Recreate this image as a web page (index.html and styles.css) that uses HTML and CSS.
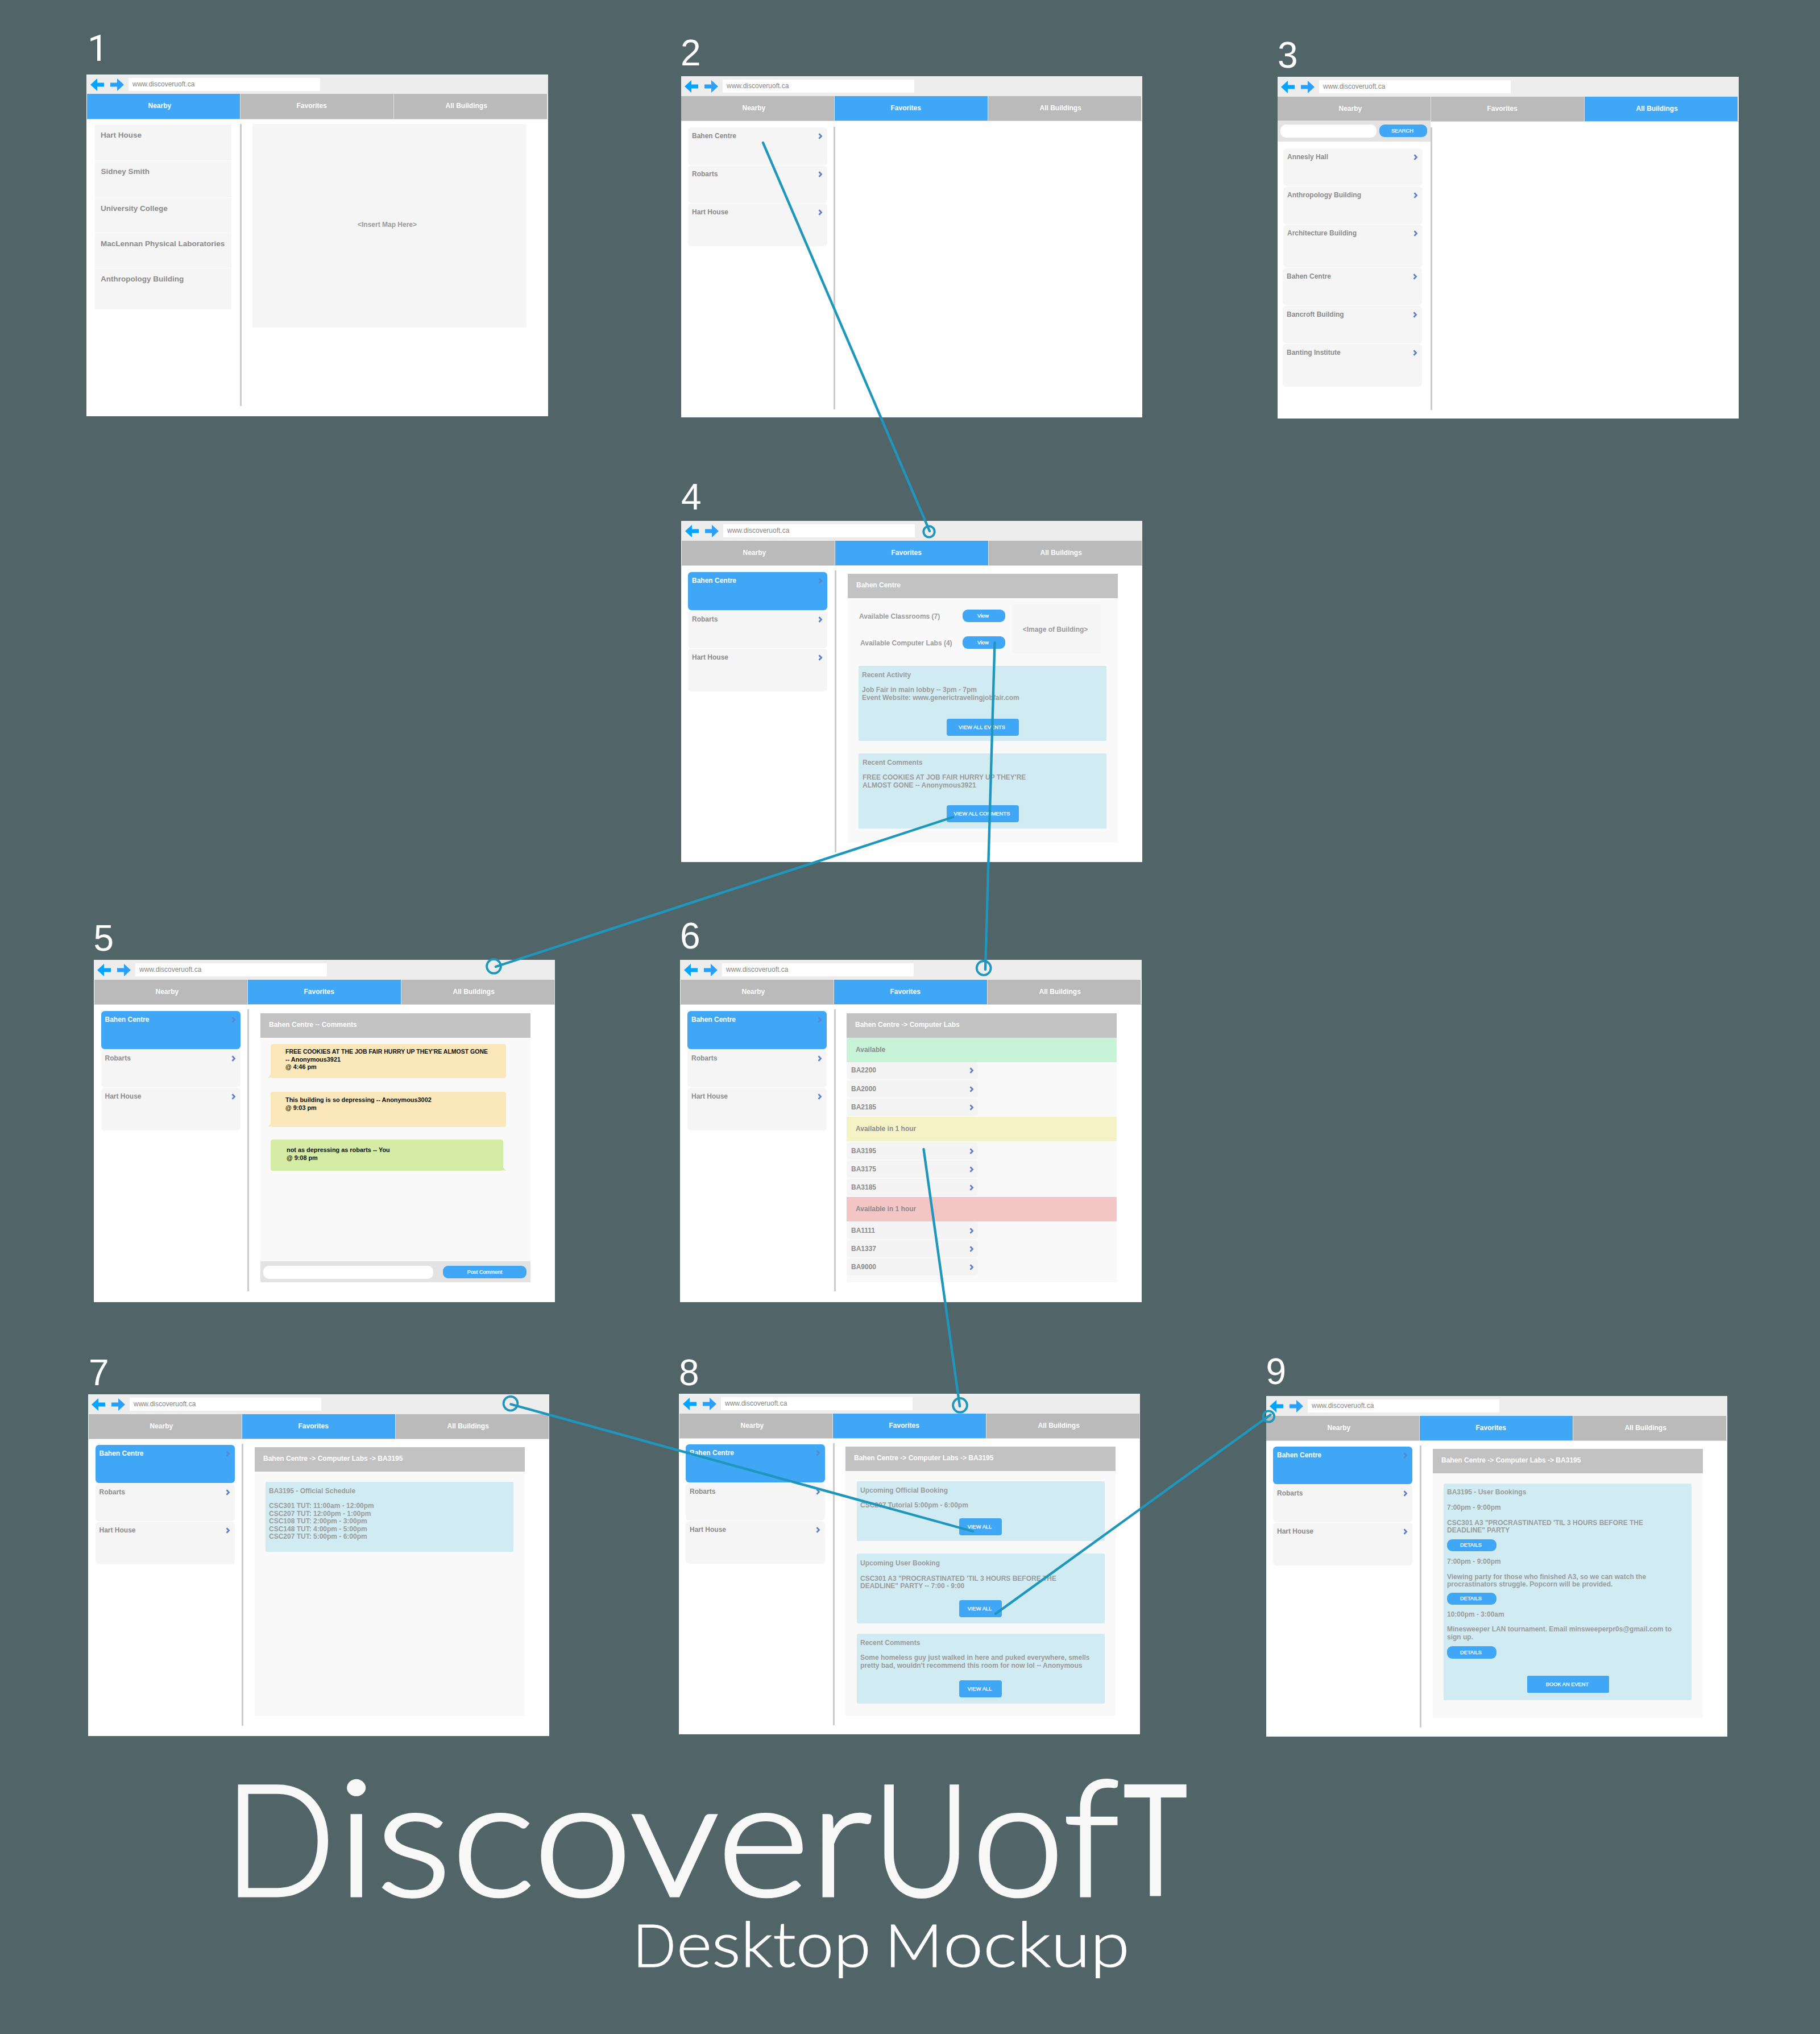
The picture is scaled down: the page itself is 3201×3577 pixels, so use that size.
FILE: index.html
```html
<!DOCTYPE html>
<html lang="en"><head><meta charset="utf-8"><title>DiscoverUofT</title><link rel="stylesheet" href="styles.css"></head>
<body>
<svg class="defs" aria-hidden="true">
  <symbol id="back" viewBox="0 0 24 22"><path d="M0 11L12 0V7.5H24V14.5H12V22Z" fill="#05a5ff"/></symbol>
  <symbol id="fwd" viewBox="0 0 24 22"><path d="M24 11L12 0V7.5H0V14.5H12V22Z" fill="#2ba0fb"/></symbol>
  <symbol id="chev" viewBox="0 0 8 11"><path d="M1.5 1.2L5.6 5.5L1.5 9.8" fill="none" stroke="#5c80c6" stroke-width="2.7"/></symbol>
</svg>
<main class="canvas">

<div class="num n1">1</div>
<section class="win w1">
  <div class="bar"><svg><use href="#back"/></svg><svg><use href="#fwd"/></svg><div class="url">www.discoveruoft.ca</div></div>
  <nav class="tabs"><div class="tab on">Nearby</div><div class="tab">Favorites</div><div class="tab">All Buildings</div></nav>
  <div class="body">
    <div class="side plain">
      <div class="item">Hart House</div><div class="item">Sidney Smith</div><div class="item">University College</div><div class="item">MacLennan Physical Laboratories</div><div class="item">Anthropology Building</div>
    </div>
    <div class="rule"></div>
    <div class="map">&lt;Insert Map Here&gt;</div>
  </div>
</section>

<div class="num n2">2</div>
<section class="win w2">
  <div class="bar"><svg><use href="#back"/></svg><svg><use href="#fwd"/></svg><div class="url">www.discoveruoft.ca</div></div>
  <nav class="tabs"><div class="tab">Nearby</div><div class="tab on">Favorites</div><div class="tab">All Buildings</div></nav>
  <div class="body">
    <div class="side">
      <div class="item">Bahen Centre<svg><use href="#chev"/></svg></div><div class="item">Robarts<svg><use href="#chev"/></svg></div><div class="item tall">Hart House<svg><use href="#chev"/></svg></div>
    </div>
    <div class="rule"></div>
  </div>
</section>

<div class="num n3">3</div>
<section class="win w3">
  <div class="bar"><svg><use href="#back"/></svg><svg><use href="#fwd"/></svg><div class="url">www.discoveruoft.ca</div></div>
  <nav class="tabs"><div class="tab">Nearby</div><div class="tab">Favorites</div><div class="tab on">All Buildings</div></nav>
  <div class="body">
    <div class="side">
      <div class="search"><div class="field"></div><div class="btn pill">SEARCH</div></div>
      <div class="item">Annesly Hall<svg><use href="#chev"/></svg></div><div class="item">Anthropology Building<svg><use href="#chev"/></svg></div><div class="item tall">Architecture Building<svg><use href="#chev"/></svg></div>
      <div class="item shift">Bahen Centre<svg><use href="#chev"/></svg></div><div class="item shift">Bancroft Building<svg><use href="#chev"/></svg></div><div class="item tall shift">Banting Institute<svg><use href="#chev"/></svg></div>
    </div>
    <div class="rule"></div>
  </div>
</section>

<div class="num n4">4</div>
<section class="win w4">
  <div class="bar"><svg><use href="#back"/></svg><svg><use href="#fwd"/></svg><div class="url">www.discoveruoft.ca</div></div>
  <nav class="tabs"><div class="tab">Nearby</div><div class="tab on">Favorites</div><div class="tab">All Buildings</div></nav>
  <div class="body">
    <div class="side">
      <div class="item on">Bahen Centre<svg><use href="#chev"/></svg></div><div class="item">Robarts<svg><use href="#chev"/></svg></div><div class="item tall">Hart House<svg><use href="#chev"/></svg></div>
    </div>
    <div class="rule"></div>
    <div class="panel">
      <div class="head">Bahen Centre</div>
      <div class="facts">
        <div class="labels"><div>Available Classrooms (7)</div><div class="second">Available Computer Labs (4)</div></div>
        <div class="views"><div class="btn pill">View</div><div class="btn pill">View</div></div>
        <div class="photo">&lt;Image of Building&gt;</div>
      </div>
      <div class="card c4a">Recent Activity<br><br>Job Fair in main lobby -- 3pm - 7pm<br>Event Website: www.generictravelingjobfair.com<div class="btn wide">VIEW ALL EVENTS</div></div>
      <div class="card c4b">Recent Comments<br><br>FREE COOKIES AT JOB FAIR HURRY UP THEY'RE<br>ALMOST GONE -- Anonymous3921<div class="btn wide">VIEW ALL COMMENTS</div></div>
    </div>
  </div>
</section>

<div class="num n5">5</div>
<section class="win w5">
  <div class="bar"><svg><use href="#back"/></svg><svg><use href="#fwd"/></svg><div class="url">www.discoveruoft.ca</div></div>
  <nav class="tabs"><div class="tab">Nearby</div><div class="tab on">Favorites</div><div class="tab">All Buildings</div></nav>
  <div class="body">
    <div class="side">
      <div class="item on">Bahen Centre<svg><use href="#chev"/></svg></div><div class="item">Robarts<svg><use href="#chev"/></svg></div><div class="item tall">Hart House<svg><use href="#chev"/></svg></div>
    </div>
    <div class="rule"></div>
    <div class="panel">
      <div class="head">Bahen Centre -- Comments</div>
      <div class="thread">
        <div class="bubble b1"><span class="caps">FREE COOKIES AT THE JOB FAIR HURRY UP THEY'RE ALMOST GONE</span><br>-- Anonymous3921<br>@ 4:46 pm</div>
        <div class="bubble b2">This building is so depressing -- Anonymous3002<br>@ 9:03 pm</div>
        <div class="bubble mine">not as depressing as robarts -- You<br>@ 9:08 pm</div>
      </div>
      <div class="post"><div class="field"></div><div class="btn pill">Post Comment</div></div>
    </div>
  </div>
</section>

<div class="num n6">6</div>
<section class="win w6">
  <div class="bar"><svg><use href="#back"/></svg><svg><use href="#fwd"/></svg><div class="url">www.discoveruoft.ca</div></div>
  <nav class="tabs"><div class="tab">Nearby</div><div class="tab on">Favorites</div><div class="tab">All Buildings</div></nav>
  <div class="body">
    <div class="side">
      <div class="item on">Bahen Centre<svg><use href="#chev"/></svg></div><div class="item">Robarts<svg><use href="#chev"/></svg></div><div class="item tall">Hart House<svg><use href="#chev"/></svg></div>
    </div>
    <div class="rule"></div>
    <div class="panel">
      <div class="head">Bahen Centre -&gt; Computer Labs</div>
      <div class="band green">Available</div>
      <div class="rooms"><div class="room">BA2200<svg><use href="#chev"/></svg></div><div class="room">BA2000<svg><use href="#chev"/></svg></div><div class="room">BA2185<svg><use href="#chev"/></svg></div></div>
      <div class="band yellow">Available in 1 hour</div>
      <div class="rooms soon"><div class="room">BA3195<svg><use href="#chev"/></svg></div><div class="room">BA3175<svg><use href="#chev"/></svg></div><div class="room">BA3185<svg><use href="#chev"/></svg></div></div>
      <div class="band red">Available in 1 hour</div>
      <div class="rooms late"><div class="room">BA1111<svg><use href="#chev"/></svg></div><div class="room">BA1337<svg><use href="#chev"/></svg></div><div class="room">BA9000<svg><use href="#chev"/></svg></div></div>
    </div>
  </div>
</section>

<div class="num n7">7</div>
<section class="win w7">
  <div class="bar"><svg><use href="#back"/></svg><svg><use href="#fwd"/></svg><div class="url">www.discoveruoft.ca</div></div>
  <nav class="tabs"><div class="tab">Nearby</div><div class="tab on">Favorites</div><div class="tab">All Buildings</div></nav>
  <div class="body">
    <div class="side">
      <div class="item on">Bahen Centre<svg><use href="#chev"/></svg></div><div class="item">Robarts<svg><use href="#chev"/></svg></div><div class="item tall">Hart House<svg><use href="#chev"/></svg></div>
    </div>
    <div class="rule"></div>
    <div class="panel">
      <div class="head">Bahen Centre -&gt; Computer Labs -&gt; BA3195</div>
      <div class="card c7">BA3195 - Official Schedule<br><br>CSC301 TUT: 11:00am - 12:00pm<br>CSC207 TUT: 12:00pm - 1:00pm<br>CSC108 TUT: 2:00pm - 3:00pm<br>CSC148 TUT: 4:00pm - 5:00pm<br>CSC207 TUT: 5:00pm - 6:00pm</div>
    </div>
  </div>
</section>

<div class="num n8">8</div>
<section class="win w8">
  <div class="bar"><svg><use href="#back"/></svg><svg><use href="#fwd"/></svg><div class="url">www.discoveruoft.ca</div></div>
  <nav class="tabs"><div class="tab">Nearby</div><div class="tab on">Favorites</div><div class="tab">All Buildings</div></nav>
  <div class="body">
    <div class="side">
      <div class="item on">Bahen Centre<svg><use href="#chev"/></svg></div><div class="item">Robarts<svg><use href="#chev"/></svg></div><div class="item tall">Hart House<svg><use href="#chev"/></svg></div>
    </div>
    <div class="rule"></div>
    <div class="panel">
      <div class="head">Bahen Centre -&gt; Computer Labs -&gt; BA3195</div>
      <div class="card c8a">Upcoming Official Booking<br><br>CSC207 Tutorial 5:00pm - 6:00pm<div class="btn all">VIEW ALL</div></div>
      <div class="card c8b">Upcoming User Booking<br><br>CSC301 A3 "PROCRASTINATED 'TIL 3 HOURS BEFORE THE<br>DEADLINE" PARTY -- 7:00 - 9:00<div class="btn all">VIEW ALL</div></div>
      <div class="card c8c">Recent Comments<br><br>Some homeless guy just walked in here and puked everywhere, smells<br>pretty bad, wouldn't recommend this room for now lol -- Anonymous<div class="btn all">VIEW ALL</div></div>
    </div>
  </div>
</section>

<div class="num n9">9</div>
<section class="win w9">
  <div class="bar"><svg><use href="#back"/></svg><svg><use href="#fwd"/></svg><div class="url">www.discoveruoft.ca</div></div>
  <nav class="tabs"><div class="tab">Nearby</div><div class="tab on">Favorites</div><div class="tab">All Buildings</div></nav>
  <div class="body">
    <div class="side">
      <div class="item on">Bahen Centre<svg><use href="#chev"/></svg></div><div class="item">Robarts<svg><use href="#chev"/></svg></div><div class="item tall">Hart House<svg><use href="#chev"/></svg></div>
    </div>
    <div class="rule"></div>
    <div class="panel">
      <div class="head">Bahen Centre -&gt; Computer Labs -&gt; BA3195</div>
      <div class="card c9">BA3195 - User Bookings<br><br>7:00pm - 9:00pm<br><br>CSC301 A3 "PROCRASTINATED 'TIL 3 HOURS BEFORE THE<br>DEADLINE" PARTY
        <div class="btn pill">DETAILS</div>
        7:00pm - 9:00pm<br><br>Viewing party for those who finished A3, so we can watch the<br>procrastinators struggle. Popcorn will be provided.
        <div class="btn pill d2">DETAILS</div>
        10:00pm - 3:00am<br><br>Minesweeper LAN tournament. Email minsweeperpr0s@gmail.com to<br>sign up.
        <div class="btn pill d3">DETAILS</div>
        <div class="btn book">BOOK AN EVENT</div>
      </div>
    </div>
  </div>
</section>

<svg class="flows" viewBox="0 0 3201 3577">
  <g fill="none" stroke="#1f97bd" stroke-width="4.4" stroke-linecap="round">
    <path d="M1342 251L1635 934M1676 1437L872 1700M1749.5 1130L1733 1705M1624.5 2021L1688 2473M1711 2693L898.5 2469.5M1751 2838L2234.5 2488"/>
    <g stroke-width="3.8"><circle cx="1634" cy="935" r="9.7"/><circle cx="868.5" cy="1699.3" r="12.4"/><circle cx="1730.2" cy="1702.4" r="12.4"/><circle cx="1688.5" cy="2471.3" r="12.4"/><circle cx="898" cy="2468.2" r="12.4"/><circle cx="2231.4" cy="2491" r="9.7"/></g>
  </g>
  <text class="title" y="3334"><tspan x="394" textLength="196" lengthAdjust="spacingAndGlyphs">D</tspan><tspan class="low" x="592" textLength="942" lengthAdjust="spacingAndGlyphs">iscover</tspan><tspan x="1535" textLength="172" lengthAdjust="spacingAndGlyphs">U</tspan><tspan class="low" x="1709" textLength="260" lengthAdjust="spacingAndGlyphs">of</tspan><tspan class="tee" x="1975" textLength="114" lengthAdjust="spacingAndGlyphs">T</tspan></text>
  <text class="subtitle" y="3459"><tspan x="1113" textLength="76" lengthAdjust="spacingAndGlyphs">D</tspan><tspan class="low" x="1190" textLength="342" lengthAdjust="spacingAndGlyphs">esktop</tspan> <tspan x="1556" textLength="102" lengthAdjust="spacingAndGlyphs">M</tspan><tspan class="low" x="1659" textLength="328" lengthAdjust="spacingAndGlyphs">ockup</tspan></text>
</svg>
</main>
</body></html>
```
FILE: styles.css
```css
*{box-sizing:border-box}
body{margin:0;background:#516468;font:bold 12px/14px "Liberation Sans",Arial,sans-serif}
.defs{position:absolute;width:0;height:0}
.canvas{position:relative;width:3201px;height:3577px;overflow:hidden;background:#516468}
.flows{position:absolute;left:0;top:0;width:3201px;height:3577px}
.title{font:300 273px Lato,sans-serif;fill:#f8f8f8;stroke:#f8f8f8;stroke-width:5}
.title .low{font-size:284px}
.title .tee{font-weight:400;stroke-width:1}
.subtitle{font:300 105px Lato,sans-serif;fill:#fff;stroke:#fff;stroke-width:1.2}
.subtitle .low{font-size:110px}

.num{position:absolute;font-size:64px;line-height:64px;font-weight:normal;color:#fff}
.n1{left:154px;top:54px;font-family:Roboto,"Liberation Sans",sans-serif}
.n2{left:1197px;top:61px}
.n3{left:2247px;top:65px}
.n4{left:1198px;top:842px}
.n5{left:164.5px;top:1618px}
.n6{left:1196px;top:1614px}
.n7{left:156px;top:2382px}
.n8{left:1194px;top:2382px}
.n9{left:2226.5px;top:2380px}

/* browser window */
.win{position:absolute;width:811px;background:#fff;display:flex;flex-direction:column}
.w1{left:152px;top:131px;width:812px;height:601px}
.w2{left:1198px;top:134px;height:600px}
.w3{left:2247px;top:135px;height:601px}
.w4{left:1198px;top:916px;height:600px}
.w5{left:165px;top:1688px;height:602px}
.w6{left:1196px;top:1688px;width:812px;height:602px}
.w7{left:155px;top:2452px;height:601px}
.w8{left:1194px;top:2451px;height:599px}
.w9{left:2227px;top:2455px;height:599px}

.bar{height:35px;background:#ededed;display:flex;align-items:flex-start;padding:6px 0 0 6px}
.bar svg{width:24px;height:22px;margin:1px 11px 0 0}
.bar .url{width:337px;height:23px;margin-left:-3px;background:#fff;padding-left:7px;font-weight:normal;line-height:23px;color:#858585}
.w1 .bar{height:34px;padding-left:7px}
.w4 .bar{padding-left:7px}
.w6 .bar,.w8 .bar{padding-left:7px}

.tabs{display:flex;height:44px;border-bottom:1px solid #d5d5d5;color:#fff}
.tab{width:270px;background:#bababa;border-right:1px solid #e3e3e3;padding:14px 0 0 107.5px}
.tab+.tab{padding-left:98.5px}
.tab+.tab+.tab{padding-left:90.5px}
.tab.on{background:#40a7f6}
.w1 .tabs,.w4 .tabs,.w5 .tabs,.w6 .tabs,.w7 .tabs,.w8 .tabs{padding-left:1px}
.w1 .tabs{height:45px}

.body{flex:1;display:flex;align-items:flex-start}
.side{width:270px;padding:11px 0 0 12px;display:flex;flex-direction:column;gap:1px}
.rule{width:3px;height:496px;margin:8px 20px 0 0;background:#ccc}
.item{width:245px;height:66px;border-radius:6px;background:#f5f5f5;color:#8b8b8b;padding:8px 8px 0 7px;display:flex;justify-content:space-between}
.item.tall{height:75px}
.item svg,.room svg{width:8px;height:11px;margin-top:2px}
.item.on{background:#40a7f6;color:#fff;height:67px}
.item.on svg{opacity:.8}
.w5 .side,.w7 .side{padding-left:12.5px}
.w7 .side,.w8 .side,.w9 .side{padding-top:10px}
.w9 .item.on{height:66px}

.plain{padding:9px 0 0 15px;gap:0}
.plain .item{width:240px;border-radius:1px;border-bottom:1px solid #fdfdfd;padding:12px 0 0 10px;font-size:13.5px;height:62px;white-space:nowrap}
.plain .item:first-child{height:64px}
.plain .item:nth-child(2){height:65px;padding-left:10.5px}
.plain .item:last-child{height:72px;border-bottom:0}
.w1 .rule{margin:8px 19px 0 0}
.map{width:482px;height:358px;margin-top:8px;background:#f5f5f5;border-radius:2px;color:#9b9b9b;padding:170px 0 0 185px}

.w2 .rule{height:497px;margin-left:-2px;margin-top:10px}
.w3 .tab:first-child{height:42px}
.w3 .side{padding:0}
.search{width:269px;height:37px;margin:-2px 0 11px;background:#e3e3e3;display:flex;padding:7px 0 0 5px;gap:5px}
.field{width:169px;height:23px;border-radius:10px;background:#fff}
.search .btn{width:84px}
.w3 .item{margin-left:10px}
.w3 .shift{margin-left:9px}
.w3 .rule{height:497px;margin-left:-1px;margin-top:10px}

/* detail panel */
.panel{width:475px;height:473px;margin-top:14px;background:#f9f9f9;display:flex;flex-direction:column}
.w5 .panel,.w6 .panel{margin-top:15px}
.head{height:43px;background:#c2c2c2;color:#fff;padding:13px 0 0 15px;flex:none}
.btn{background:#40a7f6;color:#fff;font-weight:normal;-webkit-text-stroke:.25px #fff;font-size:9.3px;display:flex;align-items:center;justify-content:center;padding-right:3px;border-radius:4px;white-space:nowrap;line-height:12px}
.pill{height:22px;border-radius:9px}
.card{width:436px;margin-left:19px;flex:none;background:#d0ecf2;border-radius:2px;color:#9b9b9b;line-height:13.45px;padding:9.5px 0 0 6px;white-space:nowrap}
.card .btn{height:30px}

.facts{height:119px;flex:none;display:flex;color:#9b9b9b}
.labels{width:202px;padding:25px 0 0 20px;display:flex;flex-direction:column;gap:33px;white-space:nowrap}
.second{padding-left:2px}
.views{width:75px;padding-top:20px;display:flex;flex-direction:column;gap:25px}
.photo{width:155px;height:87px;margin:11px 0 0 13px;background:#f5f5f5;display:flex;align-items:center;justify-content:center;padding-right:5px}
.c4a,.c4b{height:132px}
.c4b{margin-top:22px;padding-left:7px}
.c4a .btn{width:127px;margin:29.5px 0 0 149px}
.c4b .btn{width:127px;margin:27.5px 0 0 148px}

.thread{flex:1;padding:11px 0 0 18px}
.bubble{position:relative;width:414px;border-radius:4px;background:#fae8bb;color:#0c0c0c;font-size:10.9px;line-height:13.7px;padding:7px 0 0 26px;white-space:nowrap}
.bubble::after{content:"";position:absolute;left:-5px;bottom:0;width:11px;height:6px;background:inherit;clip-path:polygon(45% 0,100% 0,100% 80%,60% 80%,0 100%)}
.b1{height:60px}
.b2{height:62px;margin-top:24px;padding-top:8px}
.caps{font-size:10.5px}
.mine{width:409px;height:55px;margin-top:22px;background:#d4eca5;padding:12px 0 0 28px}
.mine::after{left:auto;right:-5px;transform:scaleX(-1)}
.post{height:37px;background:#e3e3e3;display:flex;padding:8px 0 0 5px}
.post .field{width:299px}
.post .btn{width:147px;margin-left:17px;padding-right:0}

.w6 .rule,.w8 .rule{margin-left:1px;margin-right:19px}
.w6 .side{padding-left:13px}
.band{height:43px;flex:none;padding:14px 0 0 16px;color:#8b8b8b}
.green{background:#c7f3d8}
.yellow{background:#f5f2c6}
.red{background:#f4c5c5}
.rooms{width:231px;height:96px;flex:none;display:flex;flex-direction:column;gap:2px;padding-left:1px}
.room{height:30px;border-radius:5px;background:#f4f4f4;color:#8b8b8b;padding:8px 7px 0;display:flex;justify-content:space-between}
.rooms:not(.soon):not(.late) .room:first-child{padding-top:7px}
.soon{height:98px;padding-top:2px}
.late{padding-top:1px}

.c7{height:123px;margin-top:18px}
.c8a{height:105px;margin-top:18px}
.c8b{height:123px;margin-top:22px;padding-top:11px}
.c8c{height:123px;margin-top:18px}
.all{width:75px;margin:15.5px 0 0 174px}
.w8 .card{margin-left:20px}
.c8b .all{margin-top:17.5px}
.c8c .all{margin-top:18.5px}
.c9{height:381px;margin-top:18px;padding-top:9px}
.c9 .pill{width:87px;height:21px;margin:8px 0 12px}
.c9 .d2{margin:7px 0 11px}
.c9 .d3{height:22px;margin:9px 0 0}
.c9 .book{width:144px;margin:30px 0 0 141px;border-radius:2px}
```
